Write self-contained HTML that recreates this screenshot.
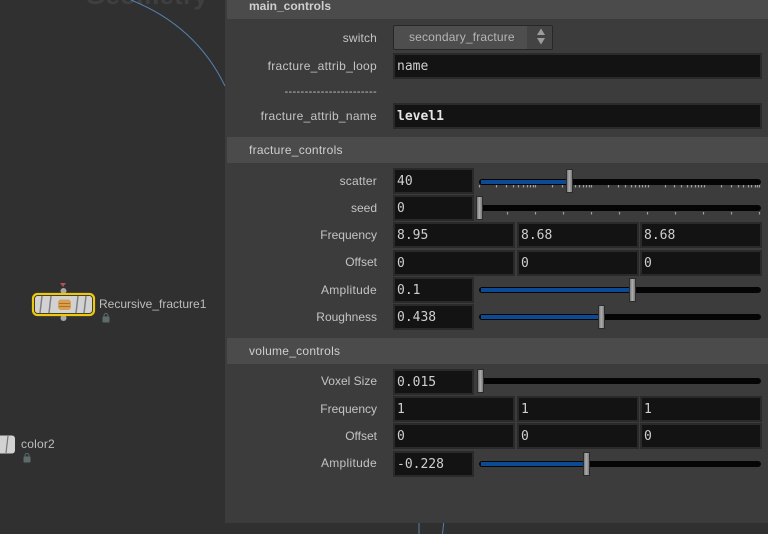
<!DOCTYPE html>
<html>
<head>
<meta charset="utf-8">
<style>
html,body{margin:0;padding:0;background:#303030;}
#r{position:relative;width:768px;height:534px;overflow:hidden;background:#303030;font-family:"Liberation Sans",sans-serif;font-size:12px;color:#c4c4c4;}
#r div{position:absolute;box-sizing:border-box;}
.panel{left:225px;top:0;width:543px;height:523px;background:#3c3c3c;}
.hd{left:227px;width:541px;background:#4b4b4b;padding-left:22px;color:#cfcfcf;line-height:26px;height:26px;letter-spacing:.26px;}
.lb{left:225px;width:152px;text-align:right;height:16px;line-height:16px;white-space:nowrap;color:#c4c4c4;}
.f{height:26px;background:#131313;border:2px solid #2a2a2a;font-family:"DejaVu Sans Mono","Liberation Mono",monospace;font-size:13px;line-height:23px;padding-left:2px;color:#cfcfcf;white-space:nowrap;}
.s{width:81px;left:393px;}
.a{width:122px;left:393px;}
.b{width:122px;left:517px;}
.c{width:122px;left:640px;}
.tr{left:479px;width:282px;height:6px;background:#050505;border-radius:3px;}
.bl{left:481px;height:4px;background:#0b4a94;}
.h{width:7px;height:24px;background:linear-gradient(90deg,#757575,#adadad 45%,#7b7b7b);border:1px solid #2b2b2b;}
svg{position:absolute;left:0;top:0;}
</style>
</head>
<body>
<div id="r">
<div style="left:85px;top:-20px;font-size:26px;font-weight:bold;color:#3f3f3f;letter-spacing:.2px;line-height:30px;">Geometry</div>
<svg width="768" height="534"><path d="M131 0Q196 26 225 86" fill="none" stroke="#5580ad" stroke-width="1"/><path d="M419 520V534M444 520L442.500 534" fill="none" stroke="#5580ad" stroke-width="1"/></svg>

<div class="panel"></div>
<div class="hd" style="top:-7px;font-weight:bold;letter-spacing:0;">main_controls</div>
<div class="hd" style="top:137px;">fracture_controls</div>
<div class="hd" style="top:338px;">volume_controls</div>

<div class="lb" style="top:30px;letter-spacing:.15px;">switch</div>
<div style="left:393px;top:25px;width:160px;height:25px;background:#4e4e4e;border:1px solid #272727;border-radius:2px;color:#b5b5b5;line-height:23px;padding-left:15px;font-size:12px;letter-spacing:.17px;">secondary_fracture</div>
<div style="left:527px;top:26px;width:25px;height:23px;background:#434343;"></div>
<svg width="768" height="534"><path d="M541 28.500L545 35H537ZM537 38H545L541 44.500Z" fill="#9c9c9c"/></svg>

<div class="lb" style="top:58px;letter-spacing:.3px;">fracture_attrib_loop</div>
<div class="f" style="left:393px;top:53px;width:369px;">name</div>
<div class="lb" style="top:84px;font-size:11px;letter-spacing:.36px;">-----------------------</div>
<div class="lb" style="top:108px;letter-spacing:.28px;">fracture_attrib_name</div>
<div class="f" style="left:393px;top:103px;width:369px;font-weight:bold;color:#e4e4e4;">level1</div>

<div class="lb" style="top:173px;letter-spacing:.2px;">scatter</div>
<div class="f s" style="top:168px;">40</div>
<div class="tr" style="top:179px;"></div>
<div class="bl" style="top:180px;width:87px;"></div>
<div class="h" style="left:566px;top:169px;"></div>
<svg width="768" height="534"><path d="M479.500 185v2.500M496.500 185v2.500M506.500 185v2.500M513.500 185v2.500M518.500 185v2.500M523.500 185v2.500M527.500 185v2.500M530.500 185v2.500M533.500 185v2.500M535.500 185v2.500M552.500 185v2.500M562.500 185v2.500M575.500 185v2.500M579.500 185v2.500M583.500 185v2.500M586.500 185v2.500M589.500 185v2.500M591.500 185v2.500M608.500 185v2.500M618.500 185v2.500M625.500 185v2.500M631.500 185v2.500M635.500 185v2.500M639.500 185v2.500M642.500 185v2.500M645.500 185v2.500M648.500 185v2.500M665.500 185v2.500M674.500 185v2.500M681.500 185v2.500M687.500 185v2.500M691.500 185v2.500M695.500 185v2.500M698.500 185v2.500M701.500 185v2.500M704.500 185v2.500M721.500 185v2.500M731.500 185v2.500M738.500 185v2.500M743.500 185v2.500M748.500 185v2.500M751.500 185v2.500M755.500 185v2.500M757.500 185v2.500M759.500 185v2.500M507.500 212v2.500M535.500 212v2.500M563.500 212v2.500M591.500 212v2.500M619.500 212v2.500M647.500 212v2.500M675.500 212v2.500M703.500 212v2.500M731.500 212v2.500M759.500 212v2.500" stroke="#a0a0a0" stroke-width="1.200" fill="none"/></svg>

<div class="lb" style="top:200px;">seed</div>
<div class="f s" style="top:195px;">0</div>
<div class="tr" style="top:205px;"></div>
<div class="h" style="left:476px;top:196px;"></div>

<div class="lb" style="top:227px;">Frequency</div>
<div class="f a" style="top:222px;">8.95</div>
<div class="f b" style="top:222px;">8.68</div>
<div class="f c" style="top:222px;">8.68</div>

<div class="lb" style="top:254px;">Offset</div>
<div class="f a" style="top:250px;">0</div>
<div class="f b" style="top:250px;">0</div>
<div class="f c" style="top:250px;">0</div>

<div class="lb" style="top:282px;letter-spacing:.3px;">Amplitude</div>
<div class="f s" style="top:277px;">0.1</div>
<div class="tr" style="top:287px;"></div>
<div class="bl" style="top:288px;width:150px;"></div>
<div class="h" style="left:629px;top:278px;"></div>

<div class="lb" style="top:309px;">Roughness</div>
<div class="f s" style="top:304px;">0.438</div>
<div class="tr" style="top:314px;"></div>
<div class="bl" style="top:315px;width:119px;"></div>
<div class="h" style="left:598px;top:305px;"></div>

<div class="lb" style="top:373px;">Voxel Size</div>
<div class="f s" style="top:369px;">0.015</div>
<div class="tr" style="top:378px;"></div>
<div class="h" style="left:477px;top:369px;"></div>

<div class="lb" style="top:401px;">Frequency</div>
<div class="f a" style="top:396px;">1</div>
<div class="f b" style="top:396px;">1</div>
<div class="f c" style="top:396px;">1</div>

<div class="lb" style="top:428px;">Offset</div>
<div class="f a" style="top:423px;">0</div>
<div class="f b" style="top:423px;">0</div>
<div class="f c" style="top:423px;">0</div>

<div class="lb" style="top:455px;letter-spacing:.3px;">Amplitude</div>
<div class="f s" style="top:451px;">-0.228</div>
<div class="tr" style="top:461px;"></div>
<div class="bl" style="top:462px;width:103px;"></div>
<div class="h" style="left:583px;top:452px;"></div>

<svg width="768" height="534">
<path d="M60 283H66L63 287Z" fill="#b5504f"/>
<circle cx="63.500" cy="291" r="3" fill="#a8a8a8"/>
<circle cx="63.500" cy="318" r="3" fill="#a8a8a8"/>
<rect x="33" y="294" width="61" height="21" rx="4.500" fill="#2c2c2c" stroke="#eec80c" stroke-width="2.200"/>
<rect x="35" y="296" width="57" height="17" rx="2.500" fill="#d2d2d2"/>
<path d="M42 296L40 313M51 296L49 313M78 296L76 313M86 296L84 313" stroke="#808080" stroke-width="1.500" fill="none"/>
<path d="M60 299.500H69L71 301.500V308L69 310H60L58 308V301.500Z" fill="#d8a050"/>
<path d="M59 303.500H70M59 306.500H70" stroke="#a9712a" stroke-width="1"/>
<rect x="102.500" y="316.500" width="7" height="6" rx="1" fill="#5e6b6b"/>
<path d="M104 317V315.500a2 2 0 0 1 4 0V317" fill="none" stroke="#5e6b6b" stroke-width="1"/>
<rect x="-8" y="435.500" width="23" height="18" rx="3" fill="#d2d2d2"/>
<path d="M8 436L6 453" stroke="#777" stroke-width="1.200"/>
<rect x="23.500" y="456.500" width="7" height="6" rx="1" fill="#5e6b6b"/>
<path d="M25 457V455.500a2 2 0 0 1 4 0V457" fill="none" stroke="#5e6b6b" stroke-width="1"/>
</svg>
<div style="left:99px;top:296px;color:#bdbdbd;line-height:16px;white-space:nowrap;">Recursive_fracture1</div>
<div style="left:21px;top:436px;color:#bdbdbd;line-height:16px;white-space:nowrap;letter-spacing:.2px;">color2</div>
</div>
</body>
</html>
